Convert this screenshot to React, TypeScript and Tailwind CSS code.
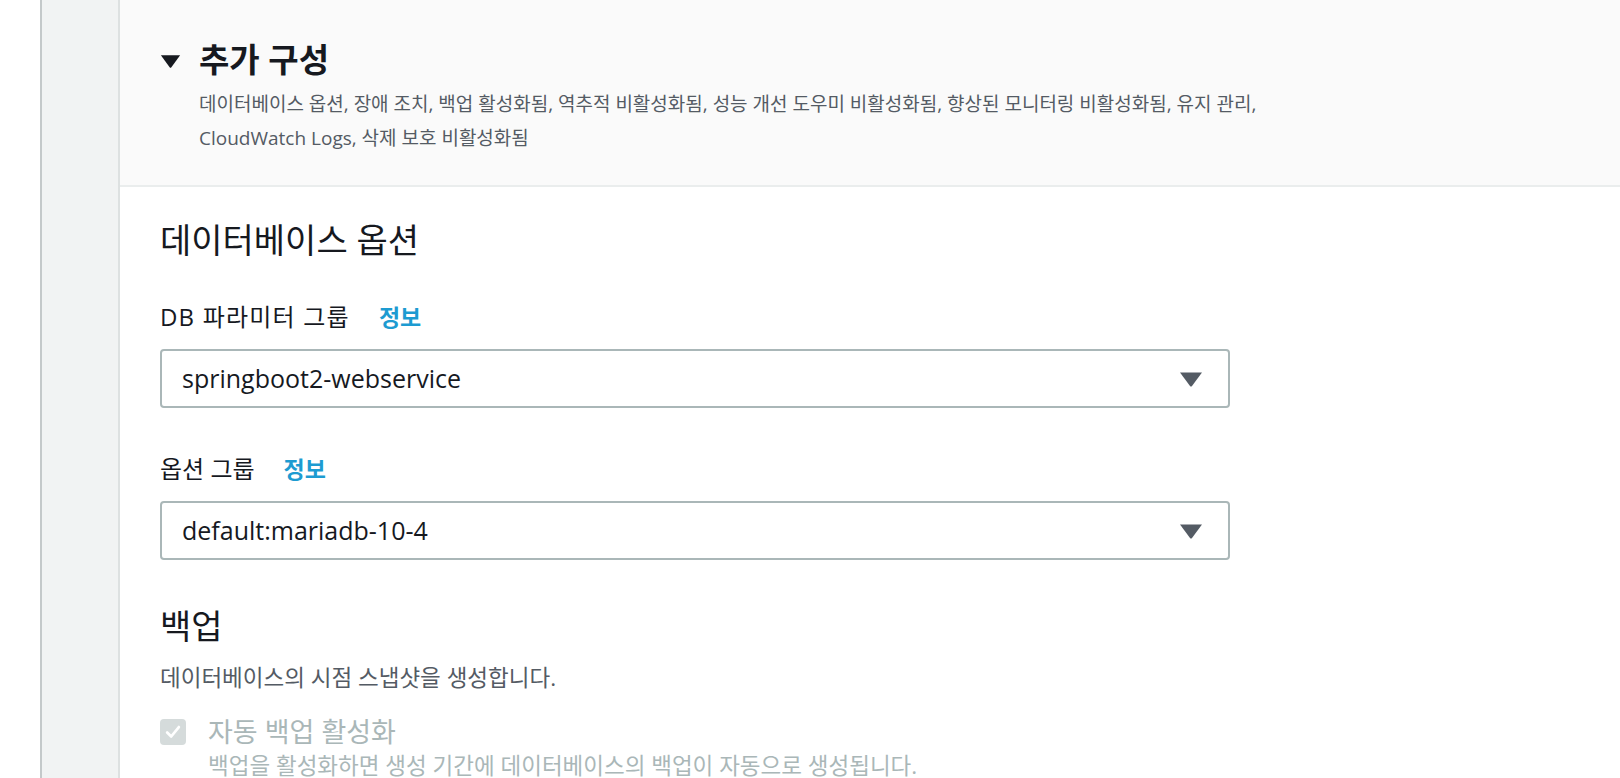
import React from "react";

const font = { fontFamily: '"Open Sans", "Noto Sans CJK KR", sans-serif' };

const Caret = ({ className }: { className?: string }) => (
  <svg viewBox="0 0 24 16" className={className}>
    <path d="M1 1.5 H23 L13 15 Q12 16.2 11 15 Z" fill="currentColor" />
  </svg>
);

const SelectBox = ({ value }: { value: string }) => (
  <div className="flex h-[59px] w-[1070px] items-center justify-between rounded-[4px] border-2 border-[#aab7b8] bg-white pl-[20px] pr-[25px]">
    <span className="text-[25px] leading-none text-[#16191f]">{value}</span>
    <Caret className="h-[16px] w-[24px] text-[#545b64]" />
  </div>
);

const FieldLabel = ({ children, wide }: { children: React.ReactNode; wide?: boolean }) => (
  <div className="flex h-[30px] items-center gap-[29px]">
    <span className={`text-[24px] text-[#16191f] ${wide ? "tracking-[1.2px]" : ""}`}>{children}</span>
    <a className="text-[23px] font-bold text-[#1d9bd1]">정보</a>
  </div>
);

export default function App() {
  return (
    <div className="flex h-[778px] w-full overflow-hidden bg-white" style={font}>
      <div className="w-[40px] shrink-0" />
      <div className="w-[80px] shrink-0 border-l-2 border-r-2 border-l-[#c4c9ca] border-r-[#dde1e1] bg-[#f1f3f3]" />
      <div className="flex flex-1 flex-col">
        <section className="border-b-2 border-[#eaeded] bg-[#fafafa] pb-[30px] pl-[40px] pt-[39px]">
          <div className="flex h-[40px] items-center gap-[18px]">
            <Caret className="mt-[4px] h-[14px] w-[21px] text-[#16191f]" />
            <h2 className="text-[33px] font-bold leading-none text-[#16191f]">추가 구성</h2>
          </div>
          <p className="mt-[8px] pl-[39px] text-[19px] leading-[34px] text-[#545b64]">
            데이터베이스 옵션, 장애 조치, 백업 활성화됨, 역추적 비활성화됨, 성능 개선 도우미 비활성화됨, 향상된 모니터링 비활성화됨, 유지 관리,
            <br />
            CloudWatch Logs, 삭제 보호 비활성화됨
          </p>
        </section>

        <section className="flex flex-col pl-[40px]">
          <h3 className="mt-[35px] h-[36px] text-[34px] leading-[36px] text-[#16191f]">데이터베이스 옵션</h3>

          <div className="mt-[44px]">
            <FieldLabel wide>DB 파라미터 그룹</FieldLabel>
          </div>
          <div className="mt-[17px]">
            <SelectBox value="springboot2-webservice" />
          </div>

          <div className="mt-[46px]">
            <FieldLabel>옵션 그룹</FieldLabel>
          </div>
          <div className="mt-[17px]">
            <SelectBox value="default:mariadb-10-4" />
          </div>

          <h3 className="mt-[48px] h-[36px] text-[34px] leading-[36px] text-[#16191f]">백업</h3>
          <p className="mt-[20px] text-[22.5px] leading-[28px] text-[#545b64]">데이터베이스의 시점 스냅샷을 생성합니다.</p>

          <label className="mt-[27px] flex h-[26px] items-center gap-[22px]">
            <span className="flex h-[26px] w-[26px] items-center justify-center rounded-[4px] bg-[#d5dbdb]">
              <svg viewBox="0 0 20 20" className="h-[18px] w-[18px]">
                <path d="M3.5 10.5 L8 15 L16.5 4.5" fill="none" stroke="white" strokeWidth="3" strokeLinecap="round" strokeLinejoin="round" />
              </svg>
            </span>
            <span className="text-[27px] text-[#aab7b8]">자동 백업 활성화</span>
          </label>
          <p className="mt-[7px] pl-[48px] text-[22.5px] leading-[28px] text-[#aab7b8]">
            백업을 활성화하면 생성 기간에 데이터베이스의 백업이 자동으로 생성됩니다.
          </p>
        </section>
      </div>
    </div>
  );
}
